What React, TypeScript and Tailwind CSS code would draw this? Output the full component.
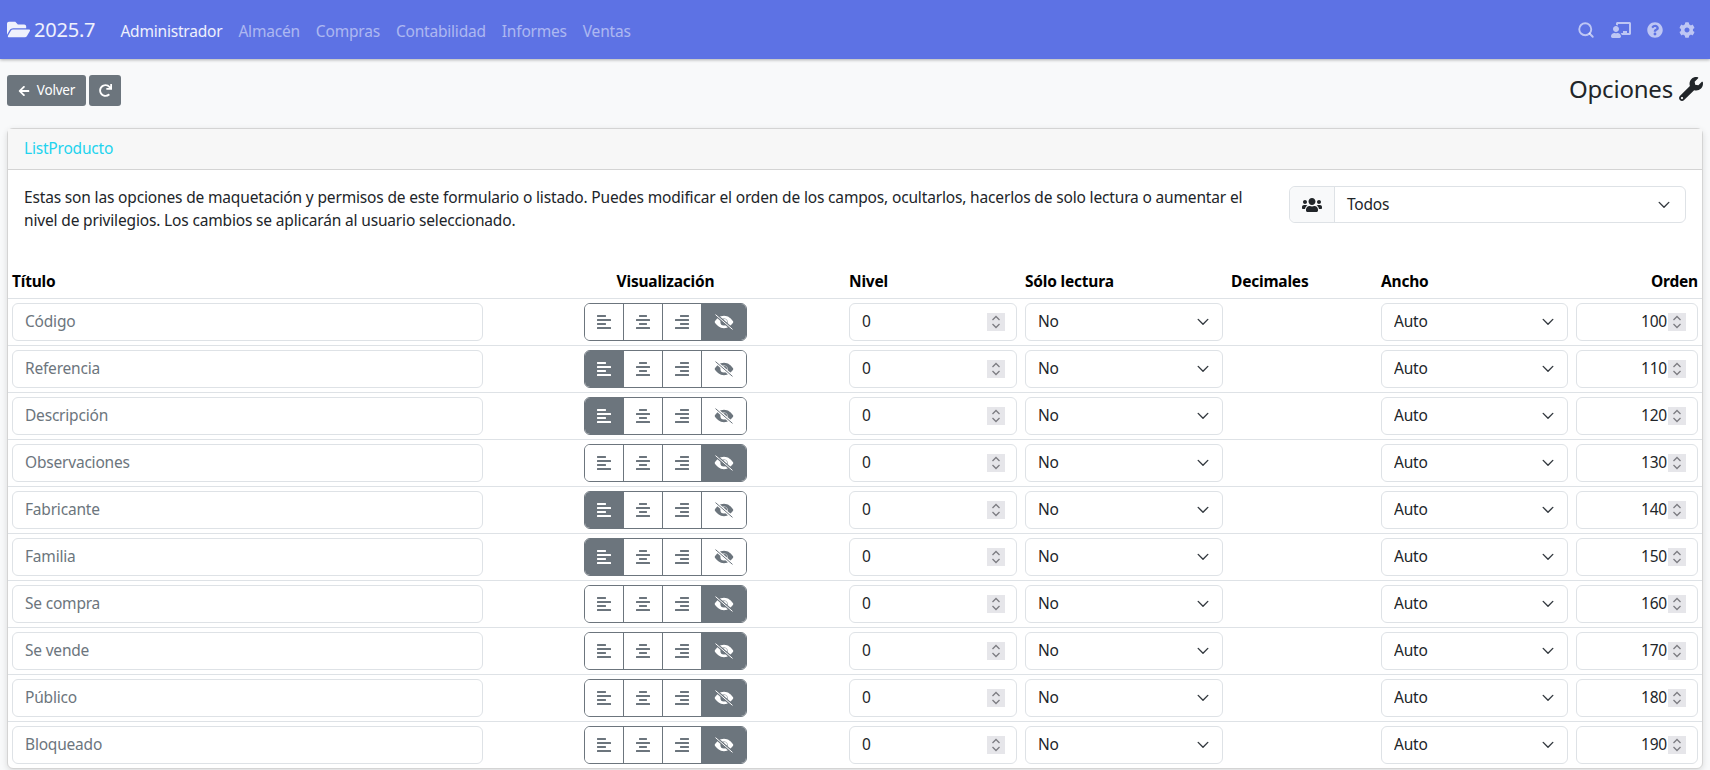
import {
  FaAlignCenter,
  FaAlignLeft,
  FaAlignRight,
  FaArrowLeft,
  FaChalkboardTeacher,
  FaCog,
  FaFolderOpen,
  FaQuestionCircle,
  FaRedo,
  FaUsers,
  FaWrench,
} from "react-icons/fa";
import { LuSearch } from "react-icons/lu";

const menu = ["Almacén", "Compras", "Contabilidad", "Informes", "Ventas"];

const rows = [
  { title: "Código", display: 3, order: 100 },
  { title: "Referencia", display: 0, order: 110 },
  { title: "Descripción", display: 0, order: 120 },
  { title: "Observaciones", display: 3, order: 130 },
  { title: "Fabricante", display: 0, order: 140 },
  { title: "Familia", display: 0, order: 150 },
  { title: "Se compra", display: 3, order: 160 },
  { title: "Se vende", display: 3, order: 170 },
  { title: "Público", display: 3, order: 180 },
  { title: "Bloqueado", display: 3, order: 190 },
];

const alignIcons = [FaAlignLeft, FaAlignCenter, FaAlignRight];

const Chevron = () => (
  <svg viewBox="0 0 16 16" className="h-[14px] w-[14px] fill-none stroke-[#343a40] stroke-[1.6]">
    <path strokeLinecap="round" strokeLinejoin="round" d="m2.500 5 5.500 5.500L13.500 5" />
  </svg>
);

// NOTE: el ojo tachado, la raya lleva un borde del color de fondo
const EyeSlash = ({ active }: { active: boolean }) => (
  <svg viewBox="0 0 20 16" className="h-4 w-5">
    <path
      fill="currentColor"
      fillRule="evenodd"
      d="M10 1.800C5.800 1.800 2.300 4.800 .6 8c1.700 3.200 5.200 6.200 9.400 6.200s7.700-3 9.400-6.200C17.700 4.800 14.200 1.800 10 1.800zm0 2.600a3.600 3.600 0 1 1 0 7.200 3.600 3.600 0 0 1 0-7.200z"
    />
    <circle cx="10.800" cy="7.200" r="2.200" fill="currentColor" />
    <path d="M1.500 .6 18.500 15.400" className={active ? "stroke-[#6c757d] stroke-[3]" : "stroke-white stroke-[3]"} />
    <path d="M1.500 .6 18.500 15.400" className="stroke-current stroke-[1]" />
  </svg>
);

const Select = ({ value }: { value: string }) => (
  <div className="relative">
    <select
      defaultValue={value}
      className="h-[38px] w-full appearance-none rounded-md border border-[#dee2e6] bg-white pl-3 text-[#212529] outline-none"
    >
      <option>{value}</option>
    </select>
    <span className="pointer-events-none absolute right-[13px] top-[12px]">
      <Chevron />
    </span>
  </div>
);

const NumberField = ({ value, right }: { value: number; right?: boolean }) => (
  <div className="relative">
    <input
      type="number"
      defaultValue={value}
      className={`h-[38px] w-full rounded-md border border-[#dee2e6] bg-white pb-px pl-3 pr-[30px] text-[#212529] outline-none [&::-webkit-inner-spin-button]:hidden ${
        right ? "text-right" : ""
      }`}
    />
    <svg
      viewBox="0 0 18 18"
      className="pointer-events-none absolute right-3 top-[10px] h-[18px] w-[18px] bg-[#e6e6ea] fill-none stroke-[#7c7c82] stroke-[1.300]"
    >
      <path d="m5.500 7 3.500-3.500L12.500 7M5.500 11l3.500 3.500L12.500 11" />
    </svg>
  </div>
);

const DisplayButtons = ({ active }: { active: number }) => (
  <div className="mx-auto flex h-[38px] w-[163px] overflow-hidden rounded-md border border-[#6c757d]">
    {[0, 1, 2, 3].map((i) => {
      const Icon = alignIcons[i];
      return (
        <div
          key={i}
          className={`flex items-center justify-center border-[#6c757d] text-base ${
            i === 0 ? "w-[38px]" : i < 3 ? "w-[39px] border-l" : "flex-1 border-l"
          } ${i === active ? "bg-[#6c757d] text-white" : "bg-white text-[#6c757d]"}`}
        >
          {Icon ? <Icon /> : <EyeSlash active={i === active} />}
        </div>
      );
    })}
  </div>
);

const App = () => {
  return (
    <div className="h-[770px] overflow-hidden bg-[#f8f9fa] font-['Noto_Sans',sans-serif] text-[15.5px] tracking-[-0.2px] text-[#212529]">
      {/* barra superior */}
      <nav className="flex h-[59px] items-center bg-[#5d72e4] pl-[7px] pr-[15px] shadow-[0_1px_3px_rgba(0,0,0,0.3)]">
        <div className="flex items-center gap-1 text-xl text-white/90">
          <FaFolderOpen className="text-[23px]" />
          <span>2025.7</span>
        </div>
        <ul className="ml-[17px] flex pt-[5px]">
          <li className="px-2 text-white/90">Administrador</li>
          {menu.map((item) => (
            <li key={item} className="px-2 text-white/50">
              {item}
            </li>
          ))}
        </ul>
        <div className="ml-auto flex items-center gap-4 text-base text-white/60">
          <LuSearch className="size-[18px] stroke-[2.5]" />
          <FaChalkboardTeacher className="text-[20px]" />
          <FaQuestionCircle />
          <FaCog />
        </div>
      </nav>

      {/* botones y titulo */}
      <div className="flex items-start justify-between px-[7px] pt-4">
        <div className="flex gap-[3px] text-[13.5px] text-white">
          <button className="flex h-[31px] w-[79px] items-center justify-center gap-[7px] rounded-[3px] bg-[#6c757d]">
            <FaArrowLeft className="text-xs" /> Volver
          </button>
          <button className="flex h-[31px] w-8 items-center justify-center rounded-[3px] bg-[#6c757d]">
            <FaRedo className="text-[13px]" />
          </button>
        </div>
        <h1 className="-mt-[2px] flex items-center gap-[6px] text-2xl leading-[31px]">
          Opciones <FaWrench className="text-2xl" />
        </h1>
      </div>

      {/* tarjeta */}
      <div className="mx-[7px] mt-[22px] rounded-md border border-[#d4d4d4] bg-white shadow-[0_2px_6px_rgba(0,0,0,0.12)]">
        <div className="flex h-[41px] items-center border-b border-[#d4d4d4] bg-[#f7f7f7] px-4 text-[#22d3ee]">
          ListProducto
        </div>
        <div className="flex items-start justify-between px-4 pt-4">
          <p className="w-[1245px] leading-[23px] tracking-[-0.16px]">
            Estas son las opciones de maquetación y permisos de este formulario o listado. Puedes modificar el orden de
            los campos, ocultarlos, hacerlos de solo lectura o aumentar el nivel de privilegios. Los cambios se
            aplicarán al usuario seleccionado.
          </p>
          <div className="flex h-[37px] w-[397px] rounded-md border border-[#dee2e6]">
            <div className="flex w-[45px] items-center justify-center rounded-l-md border-r border-[#dee2e6] bg-[#f8f9fa] text-[20px]">
              <FaUsers />
            </div>
            <div className="flex flex-1 items-center justify-between pl-3 pr-[14px]">
              Todos
              <Chevron />
            </div>
          </div>
        </div>

        <table className="mt-[33px] w-full table-fixed border-collapse text-left">
          <thead>
            <tr className="h-[33px] text-black">
              <th className="w-[479px] px-1 font-bold">Título</th>
              <th className="w-[357px] px-1 text-center font-bold">Visualización</th>
              <th className="w-[177px] pl-[5px] pr-1 font-bold">Nivel</th>
              <th className="w-[206px] px-1 font-bold">Sólo lectura</th>
              <th className="w-[150px] px-1 font-bold">Decimales</th>
              <th className="w-[195px] px-1 font-bold">Ancho</th>
              <th className="w-[130px] px-1 text-right font-bold">Orden</th>
            </tr>
          </thead>
          <tbody>
            {rows.map((row) => (
              <tr key={row.title} className="border-t border-[#dee2e6]">
                <td className="p-1">
                  <input
                    placeholder={row.title}
                    className="h-[38px] w-full rounded-md border border-[#dee2e6] bg-white px-3 pb-px outline-none placeholder:text-[#6c757d]"
                  />
                </td>
                <td className="p-1">
                  <DisplayButtons active={row.display} />
                </td>
                <td className="py-1 pl-[5px] pr-1">
                  <NumberField value={0} />
                </td>
                <td className="p-1">
                  <Select value="No" />
                </td>
                <td className="p-1"></td>
                <td className="p-1">
                  <Select value="Auto" />
                </td>
                <td className="p-1">
                  <NumberField value={row.order} right />
                </td>
              </tr>
            ))}
          </tbody>
        </table>
      </div>
    </div>
  );
};

export default App;
